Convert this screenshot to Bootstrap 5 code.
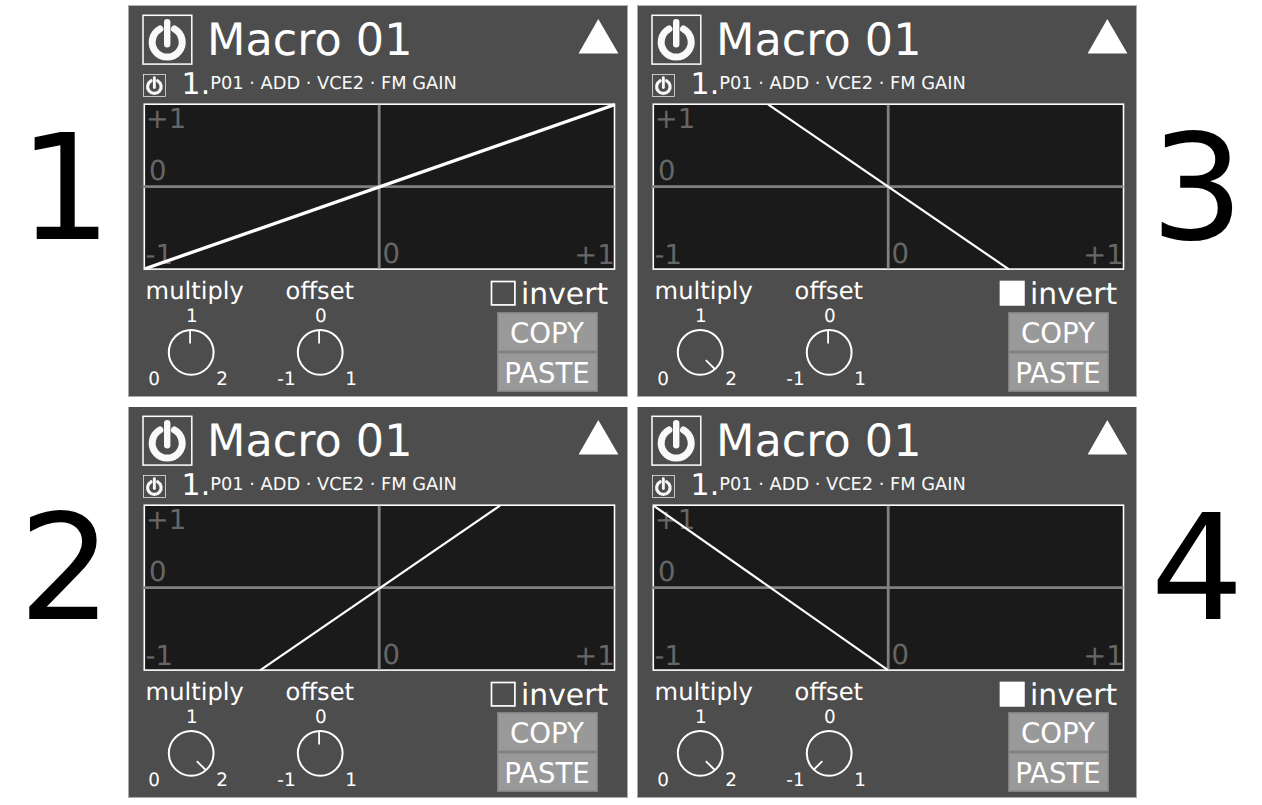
<!DOCTYPE html>
<html lang="en">
<head>
<meta charset="utf-8">
<meta name="viewport" content="width=device-width, initial-scale=1">
<title>Macro curves</title>
<link rel="stylesheet" href="https://cdn.jsdelivr.net/npm/bootstrap@5.3.0/dist/css/bootstrap.min.css">
<script src="https://cdn.jsdelivr.net/npm/bootstrap@5.3.0/dist/js/bootstrap.bundle.min.js"></script>
<style>
body { font-family: "DejaVu Sans", sans-serif; background: #fff; color: #000; overflow: hidden; text-rendering: geometricPrecision; }
svg { display: block; flex: none; overflow: visible; }
.board { grid-template-columns: 128px 500px 500px 125px; grid-template-rows: 392px 391px; column-gap: 0; row-gap: 10px; padding-top: 5px; }
.board > :nth-child(4n+3) { margin-left: 9px; margin-right: -9px; }
.fig-no { font-size: 146.8px; line-height: 170px; height: 170px; }
.fig-left { padding-left: 18.6px; }
.fig-right { padding-left: 22.5px; }
.fig-top { padding-top: 99px; }
.fig-bottom { padding-top: 77px; }
.macro { background: #4d4d4d; color: #fff; border: 1px solid #a9aaa9; border-top-color: #b4b6b4; }
.macro-low { border-top: 0; }
.head { padding: 8px 8px 0 13px; height: 59px; }
.title-txt { font-size: 44.5px; line-height: 51px; margin: 1px 0 0 14px; white-space: nowrap; }
.tri { margin-top: 4px; }
.target { height: 38px; padding-left: 14px; }
.target svg { margin-top: 9px; }
.idx { font-size: 30px; line-height: 30px; margin: 4.6px 0 0 15.6px; }
.route { font-size: 17.8px; line-height: 20px; margin-top: 8.7px; color: #f9f9f9; white-space: nowrap; }
.plot { margin-left: 13px; }
.plot text { font-size: 27.5px; fill: #666; }
.controls { padding-left: 13px; }
.knob { width: 129px; padding-top: 5px; }
.knob-name { font-size: 24.2px; line-height: 28px; padding: 1px 0 0 3.6px; height: 29px; }
.knob + .knob .knob-name { padding-left: 14.6px; }
.knob text { font-size: 18.4px; fill: #fff; }
.actions { margin-left: 90px; }
.inv { height: 41px; }
.inv svg { margin-top: 9px; }
.inv-name { font-size: 29.8px; line-height: 34px; margin: 7.4px 0 0 5px; }
.act { display: block; width: 101px; height: 40px; margin-left: 7px; padding: 3px 1px 0 0; border: 1px solid #808080; border-radius: 0; background: #999; color: #fff; font-size: 27.6px; line-height: 34px; box-shadow: inset 0 0 0 1px #8f8f8f; white-space: nowrap; }
.macro-right .act { margin-left: 9px; }
.macro-low .inv { height: 40px; }
</style>
</head>
<body>
<svg width="0" height="0" class="position-absolute">
  <symbol id="power" viewBox="0 0 51 51">
    <rect x="1" y="1.3" width="48.8" height="48.8" fill="none" stroke="#fff" stroke-width="1.5"/>
    <path d="M17.9 15A15 15 0 1 0 32.5 15" fill="none" stroke="#f9f9f9" stroke-width="7" stroke-linecap="round"/>
    <path d="M25.2 8.2V30.2" fill="none" stroke="#f9f9f9" stroke-width="6.4" stroke-linecap="round"/>
  </symbol>
</svg>
<main class="board d-grid" id="board"></main>
<script>
const figures = [
  { no: 1, line: [145, 268.7, 614.5, 104.8], w: 3.3, mul: 'mid', off: 'mid', inv: false },
  { no: 3, line: [259, 104.4, 500, 269.4], w: 2.2, mul: 'max', off: 'mid', inv: true },
  { no: 2, line: [260, 269.4, 500, 104.6], w: 2.2, mul: 'max', off: 'mid', inv: false },
  { no: 4, line: [144.5, 104.6, 379, 269.2], w: 2.2, mul: 'max', off: 'min', inv: true }
];
const ticks = { mid: 'M190.1 331V343.5', max: 'M196.8 360.2L205.8 369', min: 'M184.3 360.2L175.4 369' };
const knob = (name, pos, lo, mid, hi) => `
  <div class="knob">
    <div class="knob-name">${name}</div>
    <svg width="100" height="85" viewBox="142 305 100 85">
      <circle cx="191.2" cy="352.3" r="22.4" fill="none" stroke="#fff" stroke-width="2"/>
      <path d="${ticks[pos]}" stroke="#fff" stroke-width="1.8"/>
      <text x="186" y="322.2">${mid}</text>
      <text x="148.3" y="384.9">${lo}</text>
      <text x="216.3" y="384.9">${hi}</text>
    </svg>
  </div>`;
const panel = (f, i) => `
  <section class="macro ${i > 1 ? 'macro-low' : ''} ${i % 2 ? 'macro-right' : ''} d-flex flex-column">
    <header class="head d-flex align-items-start">
      <svg width="51" height="51"><use href="#power"/></svg>
      <div class="title-txt">Macro 01</div>
      <svg class="tri ms-auto" width="41" height="36"><path d="M20.3 .9L40.4 35.6H.6Z" fill="#fff"/></svg>
    </header>
    <div class="target d-flex align-items-start">
      <svg width="23" height="23"><use href="#power"/></svg>
      <div class="idx">1.</div>
      <div class="route">P01 · ADD · VCE2 · FM GAIN</div>
    </div>
    <svg class="plot" width="475" height="168" viewBox="142 103 475 168">
      <rect x="144.3" y="104.2" width="470.2" height="164.9" fill="#1a1a1a" stroke="#fff" stroke-width="1.6"/>
      <text x="145.8" y="128">+1</text>
      <text x="148.9" y="180">0</text>
      <text x="145.6" y="264.4">-1</text>
      <text x="382.4" y="263.4">0</text>
      <text x="574.2" y="264.4">+1</text>
      <path d="M142.6 186.7H614.5M379.2 104.8V268.5" stroke="#808080" stroke-width="2.8"/>
      <path d="M${f.line[0]} ${f.line[1]}L${f.line[2]} ${f.line[3]}" stroke="#fff" stroke-width="${f.w}"/>
    </svg>
    <div class="controls d-flex align-items-start">
      ${knob('multiply', f.mul, '0', '1', '2')}
      ${knob('offset', f.off, '-1', '0', '1')}
      <div class="actions">
        <div class="inv d-flex align-items-start">
          <svg width="26" height="26"><rect x="1.5" y="1.5" width="23.4" height="23.4" fill="${f.inv ? '#fff' : 'none'}" stroke="#fff" stroke-width="1.7"/></svg>
          <div class="inv-name">invert</div>
        </div>
        <button class="act" type="button">COPY</button>
        <button class="act" type="button">PASTE</button>
      </div>
    </div>
  </section>`;
const number = (f, i) => `<div class="${i % 2 ? 'fig-right' : 'fig-left'} ${i > 1 ? 'fig-bottom' : 'fig-top'}"><div class="fig-no">${f.no}</div></div>`;
document.getElementById('board').innerHTML = [0, 2].map(r =>
  number(figures[r], r) + panel(figures[r], r) + panel(figures[r + 1], r + 1) + number(figures[r + 1], r + 1)).join('');
</script>
</body>
</html>
